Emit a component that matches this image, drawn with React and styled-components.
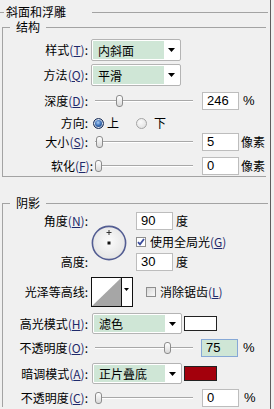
import React from 'react';
import styled, { createGlobalStyle } from 'styled-components';

const GlobalStyle = createGlobalStyle`
  html, body {
    margin: 0;
    padding: 0;
    background: #f0f0f0;
  }
  body {
    font-family: "Noto Sans CJK SC", "Noto Sans", sans-serif;
    font-size: 12px;
    color: #000;
  }
`;

const Panel = styled.div`
  width: 271px;
  height: 409px;
  box-sizing: border-box;
  border-right: 1px solid #5e5e5e;
  padding-top: 5px;
  overflow: hidden;
  background: #f0f0f0;
`;

const OuterGroup = styled.fieldset`
  margin: 0 2px 0 0;
  padding: 0;
  min-width: 0;
  border: none;
  border-top: 1px solid #a3a3a3;
  & > legend {
    margin-left: 4px;
    padding: 0 26px 0 2px;
    line-height: 14px;
  }
`;

const Group = styled.fieldset`
  margin: ${p => p.$mt || 0}px 2px 0 2px;
  padding: 0 0 ${p => p.$pb || 0}px 0;
  min-width: 0;
  border: none;
  border-top: 1px solid #a3a3a3;
  border-left: 1px solid #a3a3a3;
  border-bottom: ${p => (p.$open ? 'none' : '1px solid #a3a3a3')};
  & > legend {
    margin-left: 7px;
    padding: 0 6px;
    line-height: 16px;
  }
`;

const Row = styled.div`
  display: flex;
  align-items: center;
  height: ${p => p.$h}px;
  margin-top: ${p => p.$mt}px;
`;

const Label = styled.span`
  width: ${p => p.$w || 85}px;
  flex: none;
  text-align: right;
  white-space: nowrap;
  line-height: 16px;
`;

const Key = styled.span`
  color: #1f2a6b;
  u {
    text-underline-offset: 1px;
  }
`;

const Select = styled.div`
  width: 90px;
  height: ${p => p.$h || 22}px;
  box-sizing: border-box;
  margin-left: ${p => p.$ml ?? 3}px;
  padding: 1px;
  display: flex;
  align-items: stretch;
  border: 1px solid #b4b4b4;
  border-radius: 2px;
  background: #fff;
  flex: none;
`;

const SelectValue = styled.div`
  width: 71px;
  padding-left: 5px;
  box-sizing: border-box;
  display: flex;
  align-items: center;
  background: #cfe6d6;
`;

const Caret = styled.div`
  flex: 1;
  display: flex;
  align-items: center;
  justify-content: center;
`;

const Swatch = styled.div`
  width: 33px;
  height: 15px;
  box-sizing: border-box;
  margin-left: 2px;
  border: 1px solid #222;
  background: ${p => p.$color};
  flex: none;
`;

const Track = styled.div`
  position: relative;
  width: 98px;
  height: 14px;
  margin-left: ${p => p.$ml ?? 7}px;
  flex: none;
  &::before {
    content: '';
    position: absolute;
    left: 0;
    right: 0;
    top: 6px;
    height: 1px;
    background: #a8a8a8;
    border-bottom: 1px solid #fff;
  }
`;

const Thumb = styled.span`
  position: absolute;
  top: 1px;
  left: ${p => p.$x}px;
  width: 7px;
  height: 12px;
  box-sizing: border-box;
  border: 1px solid #8c8c8c;
  border-radius: 3px;
  background: linear-gradient(#ffffff, #d9d9d9);
`;

const NumBox = styled.div`
  width: 37px;
  height: 18px;
  box-sizing: border-box;
  margin-left: ${p => p.$ml ?? 9}px;
  padding-left: 4px;
  border: 1px solid ${p => (p.$focus ? '#86a8d6' : '#bdbdbd')};
  background: ${p => (p.$focus ? '#cfe6d6' : '#fff')};
  font-family: "Liberation Sans", Arial, sans-serif;
  font-size: 13px;
  line-height: 16px;
  flex: none;
`;

const Unit = styled.span`
  margin-left: ${p => p.$ml ?? 4}px;
  font-family: ${p => (p.$latin ? '"Liberation Sans", Arial, sans-serif' : 'inherit')};
  font-size: ${p => (p.$latin ? 13 : 12)}px;
  line-height: 16px;
`;

const Radio = styled.span`
  width: 11px;
  height: 11px;
  box-sizing: border-box;
  flex: none;
  border-radius: 50%;
  margin-left: ${p => p.$ml}px;
  border: 1px solid ${p => (p.$on ? '#1d2f57' : '#a4a4a4')};
  background: ${p =>
    p.$on
      ? 'radial-gradient(circle at 45% 40%, #a9ccf4 0, #3c70b8 40%, #1a3d74 75%)'
      : 'radial-gradient(circle at 40% 35%, #fafafa, #dcdcdc)'};
  box-shadow: ${p => (p.$on ? 'inset 0 0 0 1px #dfe6ef' : 'none')};
`;

const Option = styled.span`
  margin-left: ${p => p.$ml}px;
  line-height: 16px;
`;

const Check = styled.span`
  width: 10px;
  height: 10px;
  box-sizing: border-box;
  flex: none;
  margin-left: ${p => p.$ml || 0}px;
  border: 1px solid #8e8e8e;
  background: ${p => (p.$on ? '#fff' : 'linear-gradient(135deg, #d8d8d8, #fafafa)')};
  display: flex;
  align-items: center;
  justify-content: center;
`;

const CheckText = styled.span`
  margin-left: ${p => p.$ml}px;
  line-height: 16px;
  white-space: nowrap;
`;

const AngleBlock = styled.div`
  display: grid;
  grid-template-columns: 85px 48px 1fr;
  grid-template-rows: 18px 13px 18px;
  row-gap: 5px;
  margin-top: 1px;
  align-items: center;
`;

const DialCell = styled.div`
  grid-column: 2;
  grid-row: 1 / 4;
  align-self: start;
  margin: 13px 0 0 3px;
  width: 36px;
  height: 36px;
`;

const Cell = styled.div`
  grid-column: ${p => p.$col};
  grid-row: ${p => p.$row};
  display: flex;
  align-items: center;
`;

const ContourBox = styled.div`
  width: 42px;
  height: 30px;
  margin-left: 3px;
  flex: none;
`;

const Lbl = ({ text, k, tail = ':' }) => (
  <>
    {text}
    {k && (
      <Key>
        (<u>{k}</u>)
      </Key>
    )}
    {tail}
  </>
);

const CaretIcon = () => (
  <svg width="7" height="4" viewBox="0 0 7 4">
    <polygon points="0,0 7,0 3.5,4" fill="#000" />
  </svg>
);

const Dropdown = ({ value, h, ml }) => (
  <Select $h={h} $ml={ml}>
    <SelectValue>{value}</SelectValue>
    <Caret>
      <CaretIcon />
    </Caret>
  </Select>
);

const Slider = ({ x, ml }) => (
  <Track $ml={ml}>
    <Thumb $x={x} />
  </Track>
);

const CheckMark = () => (
  <svg width="8" height="8" viewBox="0 0 8 8">
    <path d="M1 4.2 L3 6.4 L7 1" fill="none" stroke="#3b4d9c" strokeWidth="1.8" />
  </svg>
);

const Dial = () => (
  <svg width="36" height="36" viewBox="0 0 36 36">
    <defs>
      <radialGradient id="dialFill" cx="50%" cy="45%" r="55%">
        <stop offset="0" stopColor="#fbfbfb" />
        <stop offset="1" stopColor="#e4e4e4" />
      </radialGradient>
    </defs>
    <circle cx="18" cy="18" r="16.6" fill="url(#dialFill)" stroke="#535d92" strokeWidth="1.6" />
    <path d="M18 5 V10 M15.5 7.5 H20.5" stroke="#222" strokeWidth="0.9" />
    <rect x="16.5" y="16.5" width="3" height="3" fill="#111" />
  </svg>
);

const Contour = () => (
  <svg width="42" height="30" viewBox="0 0 42 30">
    <rect x="0.5" y="0.5" width="41" height="29" fill="#fff" stroke="#111" />
    <polygon points="1,29 30,1 30,29" fill="#a6a6a6" />
    <line x1="30.5" y1="1" x2="30.5" y2="29" stroke="#111" />
    <polygon points="33,11 38,11 35.5,14" fill="#000" />
  </svg>
);

const App = () => {
  return (
    <Panel>
      <GlobalStyle />
      <OuterGroup>
        <legend>斜面和浮雕</legend>
        <Group $pb={1}>
          <legend>结构</legend>
          <Row $h={22} $mt={4}>
            <Label><Lbl text="样式" k="T" /></Label>
            <Dropdown value="内斜面" />
          </Row>
          <Row $h={22} $mt={3}>
            <Label><Lbl text="方法" k="Q" /></Label>
            <Dropdown value="平滑" />
          </Row>
          <Row $h={18} $mt={6}>
            <Label><Lbl text="深度" k="D" /></Label>
            <Slider x={21} />
            <NumBox>246</NumBox>
            <Unit $latin>%</Unit>
          </Row>
          <Row $h={14} $mt={6}>
            <Label><Lbl text="方向" /></Label>
            <Radio $on $ml={5} />
            <Option $ml={3}>上</Option>
            <Radio $ml={17} />
            <Option $ml={7}>下</Option>
          </Row>
          <Row $h={18} $mt={3}>
            <Label><Lbl text="大小" k="S" /></Label>
            <Slider x={1} />
            <NumBox>5</NumBox>
            <Unit $ml={2}>像素</Unit>
          </Row>
          <Row $h={18} $mt={6}>
            <Label $w={90}><Lbl text="软化" k="F" /></Label>
            <Slider x={0} ml={2} />
            <NumBox>0</NumBox>
            <Unit $ml={2}>像素</Unit>
          </Row>
        </Group>
      </OuterGroup>

      <Group $mt={18} $open>
        <legend>阴影</legend>
        <AngleBlock>
          <Cell $col={1} $row={1}>
            <Label><Lbl text="角度" k="N" /></Label>
          </Cell>
          <DialCell>
            <Dial />
          </DialCell>
          <Cell $col={3} $row={1}>
            <NumBox $ml={0}>90</NumBox>
            <Unit $ml={3}>度</Unit>
          </Cell>
          <Cell $col={3} $row={2}>
            <Check $on>
              <CheckMark />
            </Check>
            <CheckText $ml={4}>
              使用全局光<Key>(<u>G</u>)</Key>
            </CheckText>
          </Cell>
          <Cell $col={1} $row={3}>
            <Label><Lbl text="高度" /></Label>
          </Cell>
          <Cell $col={3} $row={3}>
            <NumBox $ml={0}>30</NumBox>
            <Unit $ml={3}>度</Unit>
          </Cell>
        </AngleBlock>

        <Row $h={30} $mt={6}>
          <Label><Lbl text="光泽等高线" /></Label>
          <ContourBox>
            <Contour />
          </ContourBox>
          <Check $ml={13} />
          <CheckText $ml={4}>
            消除锯齿<Key>(<u>L</u>)</Key>
          </CheckText>
        </Row>
        <Row $h={21} $mt={6}>
          <Label><Lbl text="高光模式" k="H" /></Label>
          <Dropdown value="滤色" h={21} ml={4} />
          <Swatch $color="#ffffff" />
        </Row>
        <Row $h={18} $mt={5}>
          <Label><Lbl text="不透明度" k="O" /></Label>
          <Slider x={69} />
          <NumBox $ml={8} $focus>75</NumBox>
          <Unit $latin $ml={5}>%</Unit>
        </Row>
        <Row $h={21} $mt={6}>
          <Label><Lbl text="暗调模式" k="A" /></Label>
          <Dropdown value="正片叠底" h={21} ml={4} />
          <Swatch $color="#a3000c" />
        </Row>
        <Row $h={18} $mt={5}>
          <Label><Lbl text="不透明度" k="C" /></Label>
          <Slider x={0} />
          <NumBox>0</NumBox>
          <Unit $latin $ml={5}>%</Unit>
        </Row>
      </Group>
    </Panel>
  );
};

export default App;
